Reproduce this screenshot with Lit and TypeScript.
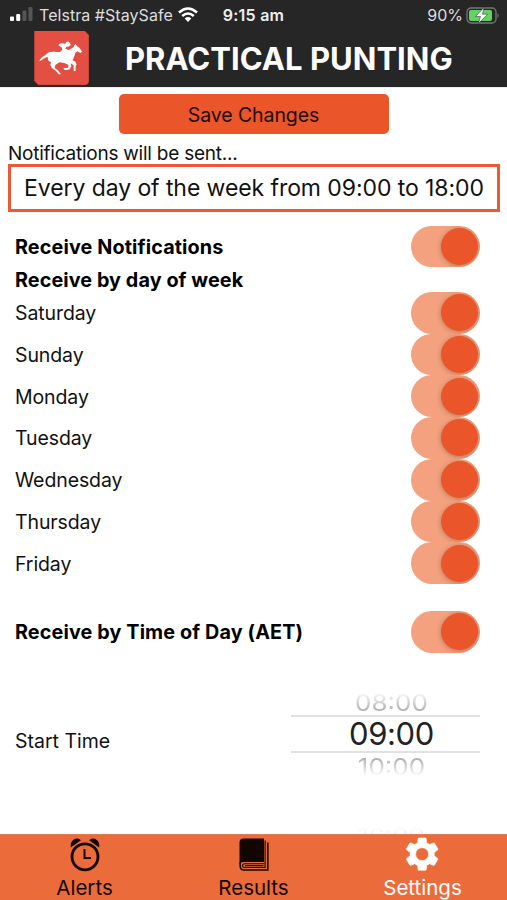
import { LitElement, html, css, svg } from "lit";
import { customElement, property } from "lit/decorators.js";

@customElement("toggle-switch")
class ToggleSwitch extends LitElement {
  static styles = css`
    :host { display: block; flex: none; width: 69px; height: 41.75px; border-radius: 21px; background: #f3a17f; overflow: hidden; }
    .track { display: flex; justify-content: flex-end; align-items: center; height: 100%; padding-right: 2.5px; box-sizing: border-box; }
    .knob { width: 37px; height: 37px; border-radius: 50%; background: #ea5529; box-shadow: 0 1px 5px rgba(90, 50, 20, 0.38); }
  `;
  render() {
    return html`<div class="track"><div class="knob"></div></div>`;
  }
}

@customElement("setting-row")
class SettingRow extends LitElement {
  @property() label = "";
  @property({ type: Boolean, reflect: true }) strong = false;
  static styles = css`
    :host { display: flex; align-items: center; justify-content: space-between; height: 41.75px; padding: 0 27px 0 15px; }
    .label { font-size: 19.5px; letter-spacing: -0.1px; white-space: nowrap; padding-top: 1px; }
    :host([strong]) .label { font-size: 19.8px; font-weight: 700; letter-spacing: 0.12px; color: #000; }
  `;
  render() {
    return html`<span class="label">${this.label}</span><toggle-switch></toggle-switch>`;
  }
}

const horse = svg`
  <path d="M100 61C103 54 111 53 121 57C122 50 130 47 134 53L138 60L130 65L124 65L121 71L131 75L146 67L148 60L152 57L155 62L164 69L171 80L166 84L157 79L151 83L148 94L143 106L151 110L155 119L152 122L152 137L146 139L146 121L137 115L139 125L132 134L119 135L115 130L129 128L131 120L118 114L103 112L91 120L89 128L100 137L108 148L101 148L92 137L80 128L76 120L78 111L70 107L68 96C62 95 54 103 43 109C45 101 52 94 62 90C70 80 81 80 94 81L105 81L112 74L111 68Z"/>`;

const alarm = svg`
  <path d="M.4 9C-1 2 6-2.500 10.400 1.800ZM28.600 9C30 2 23-2.500 18.600 1.800Z"/>
  <circle cx="14.500" cy="18.300" r="13" fill="none" stroke="currentColor" stroke-width="2.800"/>
  <path d="M14 10.500V19.500H20.500" fill="none" stroke="currentColor" stroke-width="2"/>`;

const book = svg`
  <path d="M4 0H24.500V23.500H4.500Q1.500 23.500 0 25.500V4Q0 0 4 0Z"/>
  <path d="M.7 24V27.500Q.7 31.500 4.500 31.500H28.300V4" fill="none" stroke="currentColor" stroke-width="1.600"/>
  <path d="M24.700 25.300H5Q3 25.500 3 27.300Q3 29 5 29H25.600V2" fill="none" stroke="currentColor" stroke-width="1.100"/>
  <path d="M5.500 27.200H24" fill="none" stroke="currentColor" stroke-width="1.200"/>`;

const gear = svg`
  <path transform="translate(-4.300 -3.300) scale(1.620)" fill="currentColor" stroke="currentColor" stroke-width=".35" stroke-linejoin="round" fill-rule="evenodd" d="M19.430 12.980c.040-.320.070-.640.070-.980s-.030-.660-.070-.980l2.110-1.650c.190-.150.240-.420.120-.640l-2-3.460c-.120-.220-.390-.300-.610-.220l-2.490 1c-.520-.400-1.080-.730-1.690-.980l-.380-2.650C14.460 2.180 14.250 2 14 2h-4c-.250 0-.460.180-.490.420l-.380 2.650c-.610.250-1.170.590-1.690.980l-2.490-1c-.230-.090-.490 0-.610.220l-2 3.460c-.130.220-.070.490.120.640l2.110 1.650c-.040.320-.070.650-.070.980s.030.660.070.980l-2.110 1.650c-.190.150-.240.420-.120.640l2 3.460c.120.220.390.300.610.220l2.490-1c.520.400 1.080.730 1.690.980l.380 2.650c.030.240.240.420.490.420h4c.250 0 .460-.180.490-.420l.380-2.650c.610-.250 1.170-.590 1.690-.980l2.490 1c.230.090.490 0 .610-.220l2-3.460c.120-.220.070-.490-.120-.640l-2.110-1.650zM12 16a4 4 0 1 1 0-8 4 4 0 0 1 0 8z"/>`;

@customElement("app-root")
class AppRoot extends LitElement {
  static styles = css`
    :host { display: block; height: 900px; background: #fff; color: #111; font-family: Inter, "Liberation Sans", sans-serif; overflow: hidden; }
    .screen { display: flex; flex-direction: column; height: 900px; }
    .top { background: #262626; height: 88px; flex: none; border-bottom: 1px solid #eee; color: #fff; box-sizing: border-box; }
    .status { display: grid; grid-template-columns: 1fr auto 1fr; height: 30px; align-items: center; padding: 0 7px 0 9px; font-size: 16px; box-sizing: border-box; color: #ddd; }
    .carrier, .power { display: flex; align-items: center; white-space: nowrap; }
    .power { justify-content: flex-end; gap: 3px; }
    .carrier span { margin: 0 5px 0 6px; letter-spacing: 0.05px; }
    .carrier svg, .power svg { flex: none; }
    .clock { font-weight: 600; color: #eee; letter-spacing: 0.25px; margin-right: 2px; }
    .brand { display: flex; align-items: center; height: 56px; padding-left: 34px; }
    .logo { width: 55px; height: 55px; flex: none; }
    .title { font-size: 31px; font-weight: 700; margin-left: 36px; letter-spacing: 0.02px; white-space: nowrap; }
    .save { align-self: center; display: flex; align-items: center; justify-content: center; width: 270px; height: 40px; margin-top: 6px; padding: 1px 0 0; flex: none; border-radius: 5px; background: #ea5529; color: #240b05; font-family: inherit; font-size: 19.5px; letter-spacing: -0.1px; border: 0; }
    .note { margin: 8px 0 0 8px; height: 22px; line-height: 23px; font-size: 19px; letter-spacing: -0.24px; white-space: nowrap; flex: none; }
    .summary { margin: 0 7px 0 8px; height: 48px; flex: none; box-sizing: border-box; border: 3px solid #e95b35; padding-left: 13px; display: flex; align-items: center; font-size: 23px; letter-spacing: -0.08px; white-space: nowrap; }
    .rows { margin-top: 13.5px; flex: none; }
    .sub { height: 24.500px; line-height: 26px; padding-left: 15px; font-size: 19.8px; font-weight: 700; letter-spacing: 0.08px; color: #000; white-space: nowrap; }
    .time { margin-top: 27px; }
    .start { display: flex; justify-content: space-between; margin-top: 39px; padding: 0 27px 0 15px; height: 82px; }
    .start-label { align-self: center; padding-top: 16px; font-size: 19.5px; white-space: nowrap; }
    .wheel { width: 189px; }
    .cell { height: 23px; overflow: hidden; display: flex; justify-content: center; padding-left: 12px; font-size: 26px; color: #aaa; }
    .cell span { display: block; flex: none; line-height: 23px; }
    .before { -webkit-mask-image: linear-gradient(transparent 0, #000 20px); }
    .before span { transform: translateY(-1px) scaleY(0.9); }
    .after { -webkit-mask-image: linear-gradient(#000 4px, transparent 23px); }
    .after span { transform: translateY(2px) scaleY(0.9); }
    .current { height: 38px; line-height: 34px; padding-left: 12px; text-align: center; box-sizing: border-box; border-top: 2px solid #e2e2e2; border-bottom: 2px solid #e2e2e2; font-size: 31px; letter-spacing: -0.4px; color: #222; }
    .next { flex: 1; min-height: 0; overflow: hidden; display: flex; justify-content: flex-end; align-items: flex-end; padding-right: 27px; }
    .peek { width: 177px; padding-left: 12px; height: 7px; overflow: hidden; text-align: center; font-size: 26px; line-height: 20px; color: #eee; -webkit-mask-image: linear-gradient(transparent, #000 8px); }
    .tabs { display: grid; grid-template-columns: 1fr 1fr 1fr; height: 66px; flex: none; background: #ec6b3a; border-top: 1px solid #df7954; box-sizing: border-box; color: #120603; }
    .tab { display: flex; flex-direction: column; align-items: center; padding-top: 3px; font-size: 20.5px; line-height: 24px; }
    .tab svg { width: 32px; height: 34px; margin-bottom: 4px; fill: currentColor; overflow: visible; }
    .active { color: #fff; }
  `;
  render() {
    const days = ["Saturday", "Sunday", "Monday", "Tuesday", "Wednesday", "Thursday", "Friday"];
    return html`<div class="screen">
      <header class="top">
        <div class="status">
          <div class="carrier">
            <svg width="24" height="16" viewBox="0 0 24 16"><rect x="1" y="9.500" width="4" height="4.500" rx="1" fill="#fff"/><rect x="7.200" y="7" width="4" height="7" rx="1" fill="#fff"/><rect x="13.400" y="3.500" width="4" height="10.500" rx="1" fill="#555"/><rect x="19.500" y="0" width="4" height="14" rx="1" fill="#555"/></svg>
            <span>Telstra #StaySafe</span>
            <svg width="20" height="16" viewBox="0 0 20 16" fill="none" stroke="#fff" stroke-width="2.600"><path d="M1 5.500Q10-2.500 19 5.500M4.200 9Q10 4 15.800 9"/><path d="M6.700 11.500Q10 8.600 13.300 11.500L10 15Z" fill="#fff" stroke="none"/></svg>
          </div>
          <div class="clock">9:15 am</div>
          <div class="power"><span>90%</span>
            <svg width="34" height="17" viewBox="0 0 34 17"><rect x="1" y="1" width="29" height="15" rx="4" fill="none" stroke="#777" stroke-width="1.300"/><path d="M31.500 6Q34 8.500 31.500 11Z" fill="#777"/><rect x="3" y="3" width="23" height="11" rx="2" fill="#62d266"/><path d="M18 .5L9.500 9.500H14.500L12.500 16.500L21.500 7.200H16.500Z" fill="#fff" stroke="#262626" stroke-width=".5"/></svg>
          </div>
        </div>
        <div class="brand">
          <svg class="logo" viewBox="27 18 165 165"><path d="M29 17H178L191 31V167Q191 179 179 179H40L29 168Z" fill="#e35043" stroke="#e35043" stroke-width="2" stroke-linejoin="round"/><g fill="#fff">${horse}</g></svg>
          <div class="title">PRACTICAL PUNTING</div>
        </div>
      </header>
      <button class="save">Save Changes</button>
      <div class="note">Notifications will be sent...</div>
      <div class="summary"><span>Every day of the week from 09:00 to 18:00</span></div>
      <div class="rows">
        <setting-row strong label="Receive Notifications"></setting-row>
        <div class="sub">Receive by day of week</div>
        ${days.map((d) => html`<setting-row label=${d}></setting-row>`)}
        <setting-row class="time" strong label="Receive by Time of Day (AET)"></setting-row>
        <div class="start">
          <span class="start-label">Start Time</span>
          <div class="wheel">
            <div class="cell before"><span>08:00</span></div>
            <div class="current">09:00</div>
            <div class="cell after"><span>10:00</span></div>
          </div>
        </div>
      </div>
      <div class="next"><div class="peek">16:00</div></div>
      <nav class="tabs">
        <div class="tab"><svg viewBox="-1.500 -.5 32 34">${alarm}</svg><span>Alerts</span></div>
        <div class="tab"><svg viewBox="-1.500 -.5 32 34">${book}</svg><span>Results</span></div>
        <div class="tab active"><svg viewBox="0 0 32 34">${gear}</svg><span>Settings</span></div>
      </nav>
    </div>`;
  }
}
